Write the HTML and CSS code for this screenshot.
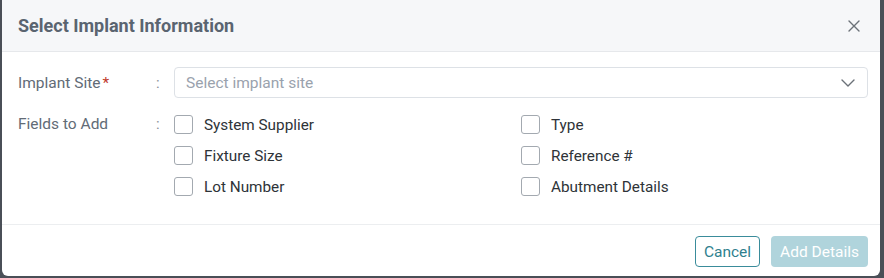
FILE: index.html
```html
<!DOCTYPE html>
<html>
<head>
<meta charset="utf-8">
<link rel="stylesheet" href="styles.css">
</head>
<body>
<div class="modal">
  <div class="modal-header">
    <h2 class="modal-title">Select Implant Information</h2>
    <button class="close-btn" aria-label="Close">
      <svg width="12" height="12" viewBox="0 0 12 12"><path d="M1 1L11 11M11 1L1 11" stroke="#6b7178" stroke-width="1.4" stroke-linecap="round"/></svg>
    </button>
  </div>
  <div class="modal-body">
    <div class="form-row">
      <div class="label">Implant Site<span class="req">*</span></div>
      <div class="colon">:</div>
      <div class="select">
        <span class="placeholder">Select implant site</span>
        <svg class="chevron" width="14" height="8" viewBox="0 0 14 8"><path d="M1 1L7 7L13 1" fill="none" stroke="#6b7178" stroke-width="1.4" stroke-linecap="round" stroke-linejoin="round"/></svg>
      </div>
    </div>
    <div class="form-row fields-row">
      <div class="label">Fields to Add</div>
      <div class="colon">:</div>
      <div class="check-grid">
        <label class="check"><span class="box"></span>System Supplier</label>
        <label class="check"><span class="box"></span>Type</label>
        <label class="check"><span class="box"></span>Fixture Size</label>
        <label class="check"><span class="box"></span>Reference #</label>
        <label class="check"><span class="box"></span>Lot Number</label>
        <label class="check"><span class="box"></span>Abutment Details</label>
      </div>
    </div>
  </div>
  <div class="modal-footer">
    <button class="btn btn-outline">Cancel</button>
    <button class="btn btn-primary">Add Details</button>
  </div>
</div>
</body>
</html>
```
FILE: styles.css
```css
* { box-sizing: border-box; }
html, body { margin: 0; padding: 0; }
body {
  background: #4a4f57;
  font-family: Roboto, "Liberation Sans", Arial, sans-serif;
  width: 884px;
  height: 278px;
  overflow: hidden;
}
.modal {
  margin-left: 2px;
  width: 878px;
  height: 276px;
  background: #fff;
  border-radius: 0 0 6px 6px;
  display: flex;
  flex-direction: column;
}
.modal-header {
  height: 52px;
  background: #f6f7f9;
  border-bottom: 1px solid #e6e8eb;
  display: flex;
  align-items: center;
  justify-content: space-between;
  padding: 0 20px 0 16px;
}
.modal-title {
  margin: 0;
  font-size: 18px;
  font-weight: 700;
  color: #5a6470;
}
.close-btn {
  border: 0;
  background: none;
  padding: 0;
  display: flex;
  width: 12px;
  height: 12px;
}
.modal-body {
  padding: 15px 12px 0 16px;
  flex: 1;
}
.form-row {
  display: grid;
  grid-template-columns: 138px 18px 1fr;
  align-items: center;
}
.label {
  font-size: 15.5px;
  color: #626b76;
}
.req { color: #c0392b; margin-left: 2px; }
.colon {
  font-size: 15px;
  color: #8a9099;
}
.select {
  height: 31px;
  border: 1px solid #dde1e6;
  border-radius: 4px;
  display: flex;
  align-items: center;
  justify-content: space-between;
  padding: 0 12px 0 11px;
}
.placeholder {
  font-size: 15.5px;
  color: #9aa2ad;
}
.fields-row {
  margin-top: 11px;
  align-items: start;
}
.fields-row .label, .fields-row .colon {
  line-height: 31px;
}
.check-grid {
  display: grid;
  grid-template-columns: 347px 1fr;
  grid-auto-rows: 31px;
}
.check {
  display: flex;
  align-items: center;
  gap: 11px;
  font-size: 15.3px;
  color: #2e3338;
}
.box {
  width: 19px;
  height: 19px;
  border: 1.5px solid #a3a9b0;
  border-radius: 3px;
  background: #fff;
}
.modal-footer {
  border-top: 1px solid #eceef0;
  display: flex;
  justify-content: flex-end;
  gap: 11px;
  padding: 11px 12px 9px 0;
}
.btn {
  height: 31px;
  border-radius: 4px;
  font-family: inherit;
  font-size: 15.5px;
  padding: 0 4px;
}
.btn-outline {
  background: #fff;
  border: 1.5px solid #3a8c9b;
  color: #2f7f8e;
  width: 65px;
}
.btn-primary {
  background: #b0d4dc;
  border: 0;
  color: #fff;
  width: 97px;
}
```
